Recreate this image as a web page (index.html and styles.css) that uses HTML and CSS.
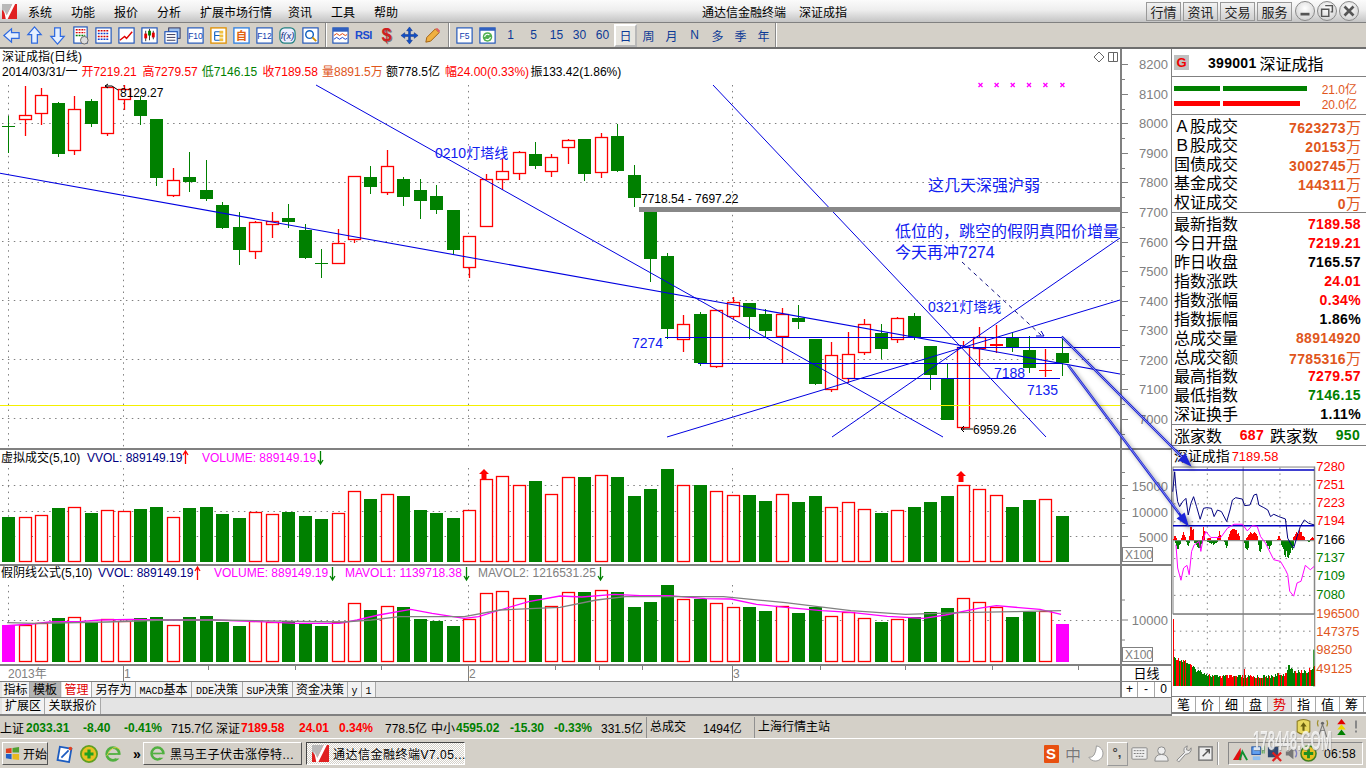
FILE: index.html
```html
<!DOCTYPE html>
<html lang="zh-CN">
<head>
<meta charset="utf-8">
<title>通达信金融终端</title>
<link rel="stylesheet" href="styles.css">
</head>
<body>
<div class="app">
  <header class="titlebar">
    <svg class="logo" viewBox="0 0 16 16"><rect width="16" height="16" fill="#e02020"/><path d="M0 0h11L5 12 0 6z" fill="#b8b8b8"/><path d="M2 6l3 6 6-12h3L6 16H4z" fill="#fff"/></svg>
    <nav class="menu"><span>系统</span><span>功能</span><span>报价</span><span>分析</span><span class="m-wide">扩展市场行情</span><span>资讯</span><span>工具</span><span>帮助</span></nav>
    <div class="apptitle"><span>通达信金融终端</span><span>深证成指</span></div>
    <div class="winbtns"><button>行情</button><button>资讯</button><button>交易</button><button>服务</button></div>
    <div class="circles">
      <i class="circle"><svg viewBox="0 0 20 20"><rect x="5" y="12" width="10" height="3" fill="#555"/></svg></i>
      <i class="circle"><svg viewBox="0 0 20 20"><path d="M8 4h8v7h-2M4 8h8v8H4z" fill="none" stroke="#555" stroke-width="1.6"/></svg></i>
      <i class="circle"><svg viewBox="0 0 20 20"><path d="M5 5l10 10M15 5L5 15" stroke="#555" stroke-width="3"/></svg></i>
    </div>
  </header>

  <div class="toolbar">
    <div class="tool"><svg viewBox="0 0 20 20"><path class="arrowicon" d="M2 10l8-7v4h8v6h-8v4z"/></svg></div>
    <div class="tool"><svg viewBox="0 0 20 20"><path class="arrowicon" d="M10 1l7 8h-4v9H7V9H3z"/></svg></div>
    <div class="tool"><svg viewBox="0 0 20 20"><path class="arrowicon" d="M10 19l7-8h-4V2H7v9H3z"/></svg></div>
    <div class="tool"><svg viewBox="0 0 20 20"><rect class="docicon" x="3" y="1" width="14" height="17"/><path d="M5 4h10M5 7h10" stroke="#e00000" stroke-width="1.5" stroke-dasharray="2 1"/><path d="M5 10h10" stroke="#008000" stroke-width="1.5" stroke-dasharray="2 1"/><circle cx="14" cy="15" r="4" fill="#ddd" stroke="#666"/></svg></div>
    <div class="tool"><svg viewBox="0 0 20 20"><rect class="docicon" x="2" y="2" width="16" height="16"/><path d="M4 5h12M4 11h12" stroke="#d00000" stroke-width="1.6" stroke-dasharray="2 1"/><path d="M4 8h12M4 14h12" stroke="#1040d0" stroke-width="1.6" stroke-dasharray="2 1"/></svg></div>
    <div class="tool"><svg viewBox="0 0 20 20"><rect class="docicon" x="2" y="2" width="16" height="16"/><path d="M3 15l5-4 2 2 6-7" fill="none" stroke="#e00000" stroke-width="1.5"/></svg></div>
    <div class="tool"><svg viewBox="0 0 20 20"><rect class="docicon" x="2" y="2" width="16" height="16"/><path d="M6 5v11M10 3v12M14 5v9" stroke="#333"/><rect x="4.5" y="8" width="3" height="5" fill="#e00000"/><rect x="8.5" y="5" width="3" height="5" fill="#008000"/><rect x="12.5" y="7" width="3" height="5" fill="#e00000"/></svg></div>
    <div class="tool"><svg viewBox="0 0 20 20"><rect x="6" y="2" width="12" height="11" fill="#9cc0f0" stroke="#335"/><rect class="docicon" x="2" y="6" width="13" height="12"/><path d="M4 9h9M4 12h9M4 15h9" stroke="#335"/></svg></div>
    <div class="tool"><svg viewBox="0 0 20 20"><rect class="docicon" x="2" y="2" width="16" height="16"/><text x="10" y="14" class="icontext">F10</text></svg></div>
    <div class="tool"><svg viewBox="0 0 20 20"><rect x="2" y="2" width="16" height="16" fill="#fff" stroke="#e09000" stroke-width="1.4"/><path d="M6 6h7M6 6v9M6 10h7M6 15h7" stroke="#1060c0" stroke-width="1.2"/><rect x="11" y="5" width="4" height="3" fill="#f0c040"/><rect x="11" y="9" width="4" height="3" fill="#f0c040"/><rect x="11" y="13" width="4" height="3" fill="#f0c040"/></svg></div>
    <div class="tool"><svg viewBox="0 0 20 20"><rect x="2" y="2" width="16" height="16" fill="#fff" stroke="#3080e0" stroke-width="1.4"/><text x="10" y="15" class="icontext oj">自</text></svg></div>
    <div class="tool"><svg viewBox="0 0 20 20"><rect class="docicon" x="2" y="2" width="16" height="16"/><text x="10" y="14" class="icontext">F12</text></svg></div>
    <div class="tool"><svg viewBox="0 0 20 20"><rect x="2" y="2" width="16" height="16" rx="5" fill="#eef" stroke="#208080" stroke-width="1.3"/><text x="10" y="14" class="icontext nv">f(x)</text></svg></div>
    <div class="tool"><svg viewBox="0 0 20 20"><rect class="docicon" x="2" y="2" width="16" height="16"/><circle cx="9" cy="9" r="4" fill="#fff" stroke="#1060c0" stroke-width="1.5"/><path d="M12 12l4 4" stroke="#d09000" stroke-width="2"/></svg></div>
    <div class="tbdiv d1"></div>
    <div class="tool"><svg viewBox="0 0 20 20"><rect class="docicon" x="2" y="2" width="16" height="16"/><rect x="2" y="2" width="16" height="4" fill="#3060c0"/><path d="M3 10l3-2 3 2 3-2 3 2 2-1" fill="none" stroke="#e04000"/><path d="M3 14l3-2 3 2 3-2 3 2 2-1" fill="none" stroke="#1040d0"/></svg></div>
    <div class="tool rsi">RSI</div>
    <div class="tool dollar">$</div>
    <div class="tool"><svg viewBox="0 0 20 20"><path d="M10 1l3 4h-2v4h4V7l4 3-4 3v-2h-4v4h2l-3 4-3-4h2v-4H5v2l-4-3 4-3v2h4V5H7z" fill="#1050c8" stroke="#0a2a80" stroke-width=".5"/></svg></div>
    <div class="tool"><svg viewBox="0 0 20 20"><path d="M13 3l4 4-9 9-5 1 1-5z" fill="#f0b040" stroke="#a06010"/><path d="M13 3l4 4 1-2-3-3z" fill="#e06060"/></svg></div>
    <div class="tbdiv d2"></div>
    <div class="tool"><svg viewBox="0 0 20 20"><rect class="docicon" x="2" y="2" width="16" height="16"/><text x="10" y="14" class="icontext">F5</text></svg></div>
    <div class="tool"><svg viewBox="0 0 20 20"><rect class="docicon" x="2" y="2" width="16" height="16"/><rect x="2" y="2" width="16" height="3" fill="#3060c0"/><circle cx="10" cy="11.5" r="5" fill="#50b050"/><path d="M7 11.5a3 3 0 0 1 5-2M13 11.5a3 3 0 0 1-5 2" fill="none" stroke="#fff" stroke-width="1.2"/></svg></div>
    <div class="tool per">1</div><div class="tool per">5</div><div class="tool per">15</div><div class="tool per">30</div><div class="tool per">60</div>
    <div class="tool per active">日</div><div class="tool per">周</div><div class="tool per">月</div><div class="tool per">N</div><div class="tool per">多</div><div class="tool per">季</div><div class="tool per">年</div>
    <div class="tbdiv d3"></div>
  </div>

  <main class="workspace">
    <section class="leftcol">
      <svg class="pane pane-main" viewBox="0 49 1171 399">
        <g id="mainGrid"></g>
        <g id="candles"></g>
        <line x1="0" y1="405.5" x2="1120" y2="405.5" class="yellowline"/>
        <g class="hlines">
          <line x1="665" y1="337.5" x2="1062" y2="337.5"/>
          <line x1="957" y1="347.5" x2="1120" y2="347.5"/>
          <line x1="698" y1="363.5" x2="1062" y2="363.5"/>
          <line x1="847" y1="378.5" x2="1060" y2="378.5"/>
        </g>
        <g class="trend">
          <line class="thick" x1="0" y1="173.3" x2="1120" y2="374"/>
          <line x1="316" y1="85" x2="943" y2="437"/>
          <line x1="713" y1="85" x2="1046" y2="437"/>
          <line x1="832" y1="437" x2="1120" y2="238"/>
          <line x1="667" y1="437" x2="1120" y2="300"/>
        </g>
        <rect x="639" y="207" width="481" height="5" class="greybar"/>
        <path class="dashed" d="M962 262L1041 335"/>
        <path class="plainblue" d="M1036 336h8l-3-5"/>
        <text x="2" y="61" class="t12">深证成指(日线)</text>
        <text y="76" class="t12"><tspan x="2">2014/03/31/一</tspan><tspan x="81.4" class="red">开7219.21</tspan><tspan x="142.4" class="red">高7279.57</tspan><tspan x="201.7" class="green">低7146.15</tspan><tspan x="262.6" class="red">收7189.58</tspan><tspan x="322" class="orange">量8891.5万</tspan><tspan x="386">额778.5亿</tspan><tspan x="445" class="red">幅24.00(0.33%)</tspan><tspan x="530.5">振133.42(1.86%)</tspan></text>
        <text x="120" y="97" class="t12">8129.27</text>
        <path class="blackline" d="M105 86l3-2M105 86l3 2M105 86h7l6 4"/>
        <text x="641" y="203" class="t12">7718.54 - 7697.22</text>
        <text x="973" y="434" class="t12">6959.26</text>
        <path class="blackline" d="M961 429h12M961 429l3-3M961 429l3 3"/>
        <text x="435" y="158" class="anno14">0210灯塔线</text>
        <text x="632" y="348" class="anno14">7274</text>
        <text x="928" y="191" class="anno16">这几天深强沪弱</text>
        <text x="895" y="237" class="anno16">低位的，跳空的假阴真阳价增量</text>
        <text x="895" y="258" class="anno16">今天再冲7274</text>
        <text x="928" y="312" class="anno14">0321灯塔线</text>
        <text x="994" y="378" class="anno14">7188</text>
        <text x="1027" y="395" class="anno14">7135</text>
        <g id="stars"></g>
        <path class="plainblack" d="M1099 52l5 5-5 5-5-5z"/>
        <path class="plainblack" d="M1108.5 52.5h9v9h-9zM1113.5 52.5v9"/>
        <line x1="1121" y1="49" x2="1121" y2="448" class="axisline"/>
        <g id="mainAxis"></g>
      </svg>

      <svg class="pane pane-vol" viewBox="0 450 1171 114">
        <g id="volGrid"></g>
        <g id="volBars"></g>
        <g id="volMarks"></g>
        <text x="1" y="462" class="t12">虚拟成交(5,10)</text>
        <text x="87" y="462" class="t12 navy">VVOL: 889149.19</text>
        <text x="202" y="462" class="t12 mag">VOLUME: 889149.19</text>
        <line x1="1121" y1="450" x2="1121" y2="564" class="axisline"/>
        <g id="volAxis"></g>
        <rect x="1122.5" y="547.5" width="30" height="14" class="xbox"/>
        <text x="1125" y="559" class="t12 gray">X100</text>
      </svg>

      <svg class="pane pane-vol2" viewBox="0 566 1171 98">
        <g id="vol2Grid"></g>
        <g id="vol2Bars"></g>
        <polyline id="maMag" class="ma mag-line" points=""/>
        <polyline id="maGray" class="ma gray-line" points=""/>
        <g id="vol2Marks"></g>
        <text x="1" y="577" class="t12">假阴线公式(5,10)</text>
        <text x="98" y="577" class="t12 navy">VVOL: 889149.19</text>
        <text x="214" y="577" class="t12 mag">VOLUME: 889149.19</text>
        <text x="345" y="577" class="t12 mag">MAVOL1: 1139718.38</text>
        <text x="478" y="577" class="t12 gray">MAVOL2: 1216531.25</text>
        <line x1="1121" y1="566" x2="1121" y2="664" class="axisline"/>
        <text x="1168" y="625" class="t13 gray end">10000</text>
        <path class="plaingray" d="M1122 620h6M1122 600h3M1122 640h3"/>
        <rect x="1122.5" y="647.5" width="30" height="14" class="xbox"/>
        <text x="1125" y="659" class="t12 gray">X100</text>
      </svg>

      <div class="timeline">
        <svg class="timeaxis" viewBox="0 666 1120 15">
          <text x="8" y="678" class="t12 gray">2013年</text>
          <text x="124" y="678" class="t12 gray">1</text>
          <text x="469" y="678" class="t12 gray">2</text>
          <text x="733" y="678" class="t12 gray">3</text>
          <path class="plaingray" d="M123.5 666v15M468.5 666v15M732.5 666v15M208.5 666v4M295.5 666v4M381.5 666v4M555.5 666v4M599.5 666v4M642.5 666v4M820.5 666v4M905.5 666v4M992.5 666v4M1078.5 666v4"/>
        </svg>
        <div class="periodbox">日线</div>
      </div>

      <div class="tabrow">
        <div class="tabs">
          <span class="tab">指标</span><span class="tab on">模板</span><span class="tab hot">管理</span><span class="tab">另存为</span><span class="tab"><b>MACD</b>基本</span><span class="tab"><b>DDE</b>决策</span><span class="tab"><b>SUP</b>决策</span><span class="tab">资金决策</span><span class="tab"><b>y</b></span><span class="tab"><b>1</b></span>
        </div>
        <div class="zoombtns"><span>+</span><span>-</span><span>0</span></div>
      </div>
      <div class="extrow"><span>扩展区</span><span>关联报价</span></div>
    </section>

    <aside class="panel">
      <div class="p-head"><span class="gbadge">G</span><b>399001</b><span class="p-name">深证成指</span></div>
      <div class="p-bars">
        <div class="barrow"><i class="seg green-bg s1"></i><i class="seg green-bg s2"></i><span>21.0亿</span></div>
        <div class="barrow"><i class="seg red-bg s1"></i><i class="seg red-bg s3"></i><span>20.0亿</span></div>
      </div>
      <div class="p-sec s5">
        <div class="row"><span>Ａ股成交</span><b class="orange-t">7623273<em>万</em></b></div>
        <div class="row"><span>Ｂ股成交</span><b class="orange-t">20153<em>万</em></b></div>
        <div class="row"><span>国债成交</span><b class="orange-t">3002745<em>万</em></b></div>
        <div class="row"><span>基金成交</span><b class="orange-t">144311<em>万</em></b></div>
        <div class="row"><span>权证成交</span><b class="orange-t">0<em>万</em></b></div>
      </div>
      <div class="p-sec s11">
        <div class="row"><span>最新指数</span><b class="red-t">7189.58</b></div>
        <div class="row"><span>今日开盘</span><b class="red-t">7219.21</b></div>
        <div class="row"><span>昨日收盘</span><b>7165.57</b></div>
        <div class="row"><span>指数涨跌</span><b class="red-t">24.01</b></div>
        <div class="row"><span>指数涨幅</span><b class="red-t">0.34%</b></div>
        <div class="row"><span>指数振幅</span><b>1.86%</b></div>
        <div class="row"><span>总成交量</span><b class="orange-t">88914920</b></div>
        <div class="row"><span>总成交额</span><b class="orange-t">7785316<em>万</em></b></div>
        <div class="row"><span>最高指数</span><b class="red-t">7279.57</b></div>
        <div class="row"><span>最低指数</span><b class="green-t">7146.15</b></div>
        <div class="row"><span>深证换手</span><b>1.11%</b></div>
      </div>
      <div class="p-updown"><span>涨家数</span><b class="red-t">687</b><span>跌家数</span><b class="green-t">950</b></div>
      <svg class="mini" viewBox="1171 448 195 250">
        <text x="1173" y="462" class="t14">深证成指</text>
        <text x="1231" y="462" class="t13 red">7189.58</text>
        <g id="miniChart"></g>
      </svg>
      <div class="p-tabs"><span>笔</span><span>价</span><span>细</span><span>盘</span><span class="hot-tab">势</span><span>指</span><span>值</span><span>筹</span></div>
    </aside>
  </main>

  <footer class="statusbar">
    <span>上证</span><b class="green-t">2033.31</b><b class="green-t">-8.40</b><b class="green-t">-0.41%</b><span>715.7亿</span><span>深证</span><b class="red-t">7189.58</b><b class="red-t">24.01</b><b class="red-t">0.34%</b><span>778.5亿</span><span>中小</span><b class="green-t">4595.02</b><b class="green-t">-15.30</b><b class="green-t">-0.33%</b><span>331.5亿</span><span class="sb-div">总成交</span><span>1494亿</span><span class="sb-div">上海行情主站</span>
    <div class="sb-icons">
      <svg viewBox="0 0 14 18"><path d="M1 3q6-3 12 0v10q-6 5-12 0z" fill="#e8d860" stroke="#8a7a20"/><path d="M7 4l3 4H8v4H6V8H4z" fill="#6a6010"/></svg>
      <svg viewBox="0 0 14 18"><path d="M7 6l-4 12M7 6l4 12M5 12h4" stroke="#777" fill="none"/><path d="M3 2a6 6 0 0 0 0 6M11 2a6 6 0 0 1 0 6" stroke="#a09030" fill="none"/><circle cx="7" cy="5" r="1.5" fill="#666"/></svg>
      <svg viewBox="0 0 14 18"><path d="M7 1l4 5H3z" fill="#e00000"/><path d="M7 6l4 5H3z" fill="#e8d800"/><path d="M7 11l4 5H3z" fill="#008000"/></svg>
      <svg viewBox="0 0 6 18"><rect x="2" y="2" width="2" height="8" fill="#888"/><rect x="2" y="12" width="2" height="2" fill="#888"/></svg>
    </div>
  </footer>

  <div class="taskbar">
    <div class="startbtn"><svg viewBox="0 0 16 16"><path d="M1 3l6-1v5.5H1z" fill="#e04020"/><path d="M8 2l7-1v6H8z" fill="#50a030"/><path d="M1 8.5h6V14l-6-1z" fill="#2060c8"/><path d="M8 8.5h7V15l-7-1z" fill="#e8b820"/></svg><span>开始</span></div>
    <div class="quick">
      <svg viewBox="0 0 20 20"><rect x="3" y="3" width="13" height="15" fill="#fff" stroke="#1c5cc0" stroke-width="2" transform="rotate(10 10 10)"/><path d="M6 14l8-8" stroke="#1c5cc0" stroke-width="2"/><circle cx="16" cy="4" r="2" fill="#e04020"/></svg>
      <svg viewBox="0 0 20 20"><circle cx="10" cy="10" r="9" fill="#e8c020" stroke="#60a020" stroke-width="2"/><path d="M10 5v10M5 10h10" stroke="#20a020" stroke-width="3.5"/></svg>
      <svg viewBox="0 0 20 20"><circle cx="10" cy="10" r="7" fill="none" stroke="#50b040" stroke-width="3"/><path d="M4 10h12" stroke="#50b040" stroke-width="2"/><path d="M18 5Q10-2 3 12" fill="none" stroke="#e0d040"/><rect x="13" y="11" width="7" height="4" fill="#d4d0c8"/></svg>
      <span class="more">»</span>
    </div>
    <div class="taskbtn"><svg viewBox="0 0 20 20"><circle cx="10" cy="10" r="7" fill="none" stroke="#50b040" stroke-width="3"/><path d="M4 10h12" stroke="#50b040" stroke-width="2"/><rect x="13" y="11" width="7" height="4" fill="#d4d0c8"/></svg><span>黑马王子伏击涨停特...</span></div>
    <div class="taskbtn cur"><svg viewBox="0 0 16 16"><rect width="16" height="16" fill="#e02020"/><path d="M0 0h11L5 12 0 6z" fill="#b8b8b8"/><path d="M2 6l3 6 6-12h3L6 16H4z" fill="#fff"/></svg><span>通达信金融终端V7.05...</span></div>
    <div class="ime">
      <i class="sogou">S</i>
      <i class="glyph">中</i>
      <svg viewBox="0 0 20 20"><path d="M11 2a8 8 0 1 1-8 12q7 1 8-12z" fill="#fff" stroke="#999"/></svg>
      <i class="punct">°,</i>
      <svg viewBox="0 0 20 20"><rect x="2" y="4" width="16" height="12" rx="1" fill="#eee" stroke="#888"/><path d="M4 7h12M4 10h12M6 13h8" stroke="#777" stroke-dasharray="2 1"/></svg>
      <svg viewBox="0 0 20 20"><circle cx="10" cy="7" r="4" fill="#eee" stroke="#888"/><path d="M3 18q0-7 7-7t7 7z" fill="#eee" stroke="#888"/></svg>
      <svg viewBox="0 0 20 20"><path d="M3 17l8-8q-2-5 3-7l-1 4 3 1 2-3q1 6-6 7l-7 8z" fill="#eee" stroke="#888"/></svg>
      <svg viewBox="0 0 20 20"><rect x="3" y="3" width="14" height="14" fill="#eee" stroke="#777" stroke-width="1.5"/><path d="M7 13l7-7M10 6h4v4" fill="none" stroke="#555" stroke-width="1.5"/></svg>
    </div>
    <div class="imediv"></div>
    <div class="tray">
      <svg viewBox="0 0 18 18"><path d="M1 16L9 3l1 13z" fill="#e01010"/><path d="M8 16l3-9 5 9" fill="none" stroke="#109030" stroke-width="2"/></svg>
      <svg viewBox="0 0 18 18"><rect x="3" y="2" width="9" height="8" fill="#60a0f0" stroke="#2050a0"/><rect x="4" y="12" width="8" height="4" fill="#90c0f0"/><path d="M14 3v6M16 1v8" stroke="#40a040"/></svg>
      <svg viewBox="0 0 18 18"><rect x="2" y="2" width="11" height="11" fill="#304870"/><path d="M7 8l9 9M16 8l-9 9" stroke="#e02020" stroke-width="2.4"/></svg>
      <svg viewBox="0 0 18 18"><path d="M3 7h3l5-4v12l-5-4H3z" fill="#777"/><path d="M13 5q3 4 0 8" fill="none" stroke="#8080c0" stroke-width="1.5"/></svg>
      <svg viewBox="0 0 18 18"><circle cx="9" cy="9" r="8" fill="#e8c020" stroke="#408020" stroke-width="1.6"/><path d="M9 4v10M4 9h10" stroke="#209020" stroke-width="3"/></svg>
      <time>06:58</time>
    </div>
    <div class="watermark">178448.COM</div>
  </div>

  <svg class="overlay" viewBox="0 0 1366 768">
    <g class="bigarrow">
      <line x1="1061.7" y1="336.7" x2="1185" y2="460"/>
      <polygon points="1191.7,466.7 1185.2,453.2 1178.2,460.2"/>
      <line x1="1068" y1="365" x2="1181" y2="516"/>
      <polygon points="1189,526.7 1184.6,512.5 1176.6,518.5"/>
    </g>
    <g class="bigarrow-in">
      <line x1="1061.7" y1="336.7" x2="1182" y2="457"/>
      <line x1="1068" y1="365" x2="1179" y2="513"/>
    </g>
  </svg>
</div>
<script src="app.js"></script>
</body>
</html>
```

FILE: styles.css
```css
* { box-sizing: border-box; }
html, body { margin: 0; padding: 0; background: #d4d0c8; }
body { font-family: "Liberation Sans", "Noto Sans CJK SC", sans-serif; font-size: 12px; color: #000; }
.app { position: relative; width: 1366px; height: 768px; overflow: hidden; display: flex; flex-direction: column; background: #d4d0c8; }
svg { display: block; }
svg text { font-family: "Liberation Sans", "Noto Sans CJK SC", sans-serif; fill: #000; }

/* title bar */
.titlebar { height: 23px; flex: none; display: flex; align-items: center; background: linear-gradient(#fbfbfb, #eeeeee 45%, #c4c4c4); border-bottom: 1px solid #808080; padding-left: 2px; }
.logo { width: 15px; height: 15px; flex: none; }
.menu { display: flex; margin-left: 11px; width: 395px; flex: none; }
.menu span { width: 43px; }
.menu .m-wide { width: 88px; }
.apptitle { margin-left: 279px; width: 444px; display: flex; gap: 13px; flex: none; }
.winbtns { display: flex; gap: 2px; margin-left: 0; flex: none; }
.winbtns button { width: 35px; height: 19px; padding: 0; font: 13px "Noto Sans CJK SC", sans-serif; line-height: 17px; background: linear-gradient(#f2f2f2, #cfcfcf); border: 1px solid #999; color: #222; }
.circles { display: flex; gap: 2px; margin-left: 3px; flex: none; }
.circle { width: 20px; height: 20px; border-radius: 50%; border: 1px solid #8a8a8a; background: radial-gradient(circle at 50% 35%, #fff, #c8c8c8); display: block; }
.circle svg { width: 18px; height: 18px; }

/* toolbar */
.toolbar { height: 26px; flex: none; display: flex; align-items: center; background: #d4d0c8; border-bottom: 2px solid #6e6e6e; }
.tool { width: 23px; height: 23px; flex: none; display: flex; align-items: center; justify-content: center; }
.tool svg { width: 19px; height: 19px; }
.arrowicon { fill: #e6f0ff; stroke: #2f6ae0; stroke-width: 1.3; }
.docicon { fill: #fff; stroke: #1c52b8; stroke-width: 1.2; }
.icontext { font-size: 9px; text-anchor: middle; fill: #1040b0; }
svg text.icontext { fill: #1040b0; }
svg text.icontext.oj { font-size: 12px; fill: #e06010; font-weight: 700; }
svg text.icontext.nv { fill: #103080; font-style: italic; font-size: 10px; }
.tbdiv { width: 2px; height: 24px; flex: none; background: #8a8a8a; border-right: 1px solid #fff; }
.d1 { margin: 0 2px 0 3px; }
.d2 { margin: 0 3px 0 4px; }
.d3 { margin-left: 0; }
.rsi { color: #1a4ad0; font-weight: 700; font-size: 11px; letter-spacing: -.5px; }
.dollar { color: #d02020; font-weight: 700; font-size: 18px; text-shadow: 1px 1px 0 #777; }
.per { color: #0c3a96; font-size: 12px; }
.per.active { background: #e8e6e0; border: 2px solid #fff; border-right-color: #b8b8b8; border-bottom-color: #b8b8b8; }

/* workspace */
.workspace { height: 667px; flex: none; display: flex; background: #fff; }
.leftcol { width: 1171px; flex: none; display: flex; flex-direction: column; border-left: 1px solid #808080; }
.pane { width: 1171px; flex: none; margin-left: -1px; background: #fff; }
.pane-main { height: 399px; }
.pane-vol { height: 114px; }
.pane-vol2 { height: 98px; }
.pane-main, .pane-vol, .pane-vol2 { box-shadow: 0 2px 0 #808080; margin-bottom: 2px; }

.t12 { font-size: 12px; }
.t13 { font-size: 13px; }
.t14 { font-size: 14px; }
.end { text-anchor: end; }
svg text.red { fill: #ff0000; }
svg text.green, tspan.green { fill: #008000; }
tspan.red { fill: #ff0000; }
tspan.orange { fill: #e0561c; }
svg text.orange { fill: #e0561c; }
svg text.navy { fill: #000080; }
svg text.mag { fill: #ff00ff; }
svg text.gray { fill: #808080; }
.anno14 { font-size: 14px; }
.anno16 { font-size: 16px; }
svg text.anno14, svg text.anno16 { fill: #1020f0; }
.yellowline { stroke: #f4f000; stroke-width: 1; }
.hlines line { stroke: #0000e0; stroke-width: 1.2; }
.trend line { stroke: #0000e0; stroke-width: 1; }
.trend line.thick { stroke-width: 1.1; }
.greybar { fill: #888888; }
.dashed { fill: none; stroke: #101080; stroke-width: 1; stroke-dasharray: 4 4; }
.plainblue { fill: none; stroke: #0000c0; }
.plainblack { fill: none; stroke: #666; }
.plaingray { fill: none; stroke: #808080; }
.blackline { fill: none; stroke: #000; }
.axisline { stroke: #808080; stroke-width: 2; }
.xbox { fill: #fff; stroke: #808080; }
.ma { fill: none; stroke-width: 1.3; }
.mag-line { stroke: #ff00ff; }
.gray-line { stroke: #808080; }

/* timeline + tabs */
.timeline { height: 16px; flex: none; display: flex; margin-left: -1px; background: #fff; border-bottom: 1px solid #808080; }
.timeaxis { width: 1120px; height: 15px; flex: none; }
.periodbox { width: 51px; border-left: 2px solid #808080; text-align: center; font-size: 13px; line-height: 15px; }
.tabrow { height: 16px; flex: none; display: flex; margin-left: -1px; background: #e4e4e4; border-bottom: 1px solid #808080; }
.tabs { width: 1120px; flex: none; padding-left: 2px; display: grid; grid-template-columns: 28px 31px 31px 44px 56px 51px 50px 55px 14px 14px; }
.tab { text-align: center; line-height: 16px; font-size: 12px; background: #f2f2f2; border-right: 1px solid #a8a8a8; white-space: nowrap; overflow: hidden; }
.tab b { font: 400 10px "Liberation Mono", monospace; }
.tab.on { background: #b4b4b4; }
.tab.hot { color: #e00000; background: #fff; margin-left: 1px; }
.zoombtns { width: 51px; flex: none; display: grid; grid-template-columns: 16px 17px 18px; background: #fff; border-left: 2px solid #808080; }
.zoombtns span { text-align: center; line-height: 15px; border-right: 1px solid #a8a8a8; }
.extrow { height: 18px; flex: none; display: flex; margin-left: -1px; background: #e4e4e4; padding-left: 2px; border-bottom: 2px solid #808080; }
.extrow span { padding: 0 3px; line-height: 17px; border-right: 1px solid #a8a8a8; background: #f2f2f2; width: 43px; white-space: nowrap; text-align: center; }
.extrow span + span { width: 56px; }

/* quote panel */
.panel { width: 195px; flex: none; display: flex; flex-direction: column; background: #fff; border-left: 1px solid #808080; }
.p-head { height: 28px; flex: none; display: flex; align-items: center; padding-left: 2px; border-bottom: 1px solid #808080; font-size: 14px; }
.gbadge { width: 15px; height: 15px; background: #c0c0c0; color: #f00000; font: 700 13px/15px "Liberation Sans", sans-serif; text-align: center; margin-right: 19px; }
.p-head b { letter-spacing: .3px; }
.p-name { margin-left: 3px; font-size: 16px; }
.p-bars { height: 38px; flex: none; padding: 4px 0 0 2px; border-bottom: 1px solid #808080; display: flex; flex-direction: column; }
.barrow { height: 15px; flex: none; display: flex; align-items: center; position: relative; }
.seg { display: block; height: 5px; margin-right: 3px; }
.s1 { width: 46px; }
.s2 { width: 84px; }
.s3 { width: 77px; }
.green-bg { background: #008000; }
.red-bg { background: #ff0000; }
.barrow span { position: absolute; right: 9px; color: #e0561c; font-size: 12px; }
.p-sec { flex: none; padding: 2px 5px 0 2px; border-bottom: 1px solid #808080; }
.s5 { height: 98px; }
.s11 { height: 212px; }
.row { height: 19px; display: flex; justify-content: space-between; align-items: center; font-size: 16px; line-height: 19px; white-space: nowrap; }
.row b { font-size: 14px; letter-spacing: .35px; font-family: "Liberation Sans", sans-serif; }
.row em { font: 400 15px "Noto Sans CJK SC", sans-serif; letter-spacing: 0; }
.orange-t { color: #e0561c; }
.red-t { color: #ff0000; }
.green-t { color: #008000; }
.p-updown { height: 21px; flex: none; display: flex; align-items: center; padding: 0 3px 0 2px; font-size: 16px; border-bottom: 1px solid #808080; }
.p-updown b { font-size: 14px; letter-spacing: .3px; width: 42px; text-align: right; margin-right: 6px; font-family: "Liberation Sans", sans-serif; }
.p-updown b:last-child { margin-right: 0; }
.mini { width: 194px; height: 250px; flex: none; }
.p-tabs { height: 18px; flex: none; display: grid; grid-template-columns: repeat(8, 24px); border-top: 1px solid #808080; border-bottom: 2px solid #808080; font-size: 13px; text-align: center; line-height: 15px; }
.p-tabs span { border-right: 1px solid #a8a8a8; }
.p-tabs .hot-tab { color: #e00000; background: #e4e4e4; }

/* status */
.statusbar { height: 23px; flex: none; display: grid; grid-template-columns: 26px 57px 41px 47px 45px 25px 58px 40px 46px 46px 25px 54px 44px 47px 45px 57px 51px 200px 1fr; align-items: center; font-size: 12px; border-bottom: 1px solid #fff; padding-top: 1px; white-space: nowrap; }
.sb-div { border-left: 1px solid #909090; padding-left: 3px; line-height: 21px; }
.sb-icons { display: flex; gap: 4px; justify-content: flex-end; padding-right: 7px; align-items: center; }
.sb-icons svg { width: 15px; height: 19px; }
.sb-icons svg:last-child { width: 6px; }

/* taskbar */
.taskbar { height: 29px; flex: none; display: flex; align-items: center; position: relative; padding-left: 2px; }
.startbtn { width: 46px; height: 23px; flex: none; display: flex; align-items: center; gap: 3px; padding-left: 2px; font-size: 12px; white-space: nowrap; border: 1px solid; border-color: #fff #555 #555 #fff; background: #d4d0c8; }
.startbtn svg { width: 15px; height: 15px; flex: none; }
.quick { width: 95px; display: flex; align-items: center; gap: 6px; padding-left: 8px; flex: none; }
.quick svg { width: 18px; height: 18px; flex: none; }
.more { font-size: 14px; font-weight: 700; margin-left: 5px; }
.taskbtn { width: 159px; height: 23px; flex: none; display: flex; align-items: center; gap: 4px; padding-left: 5px; border: 1px solid; border-color: #fff #555 #555 #fff; margin-right: 4px; font-size: 12px; letter-spacing: .5px; white-space: nowrap; }
.taskbtn svg { width: 17px; height: 17px; flex: none; }
.taskbtn.cur { border-color: #444 #fff #fff #444; background-color: #eeece8; background-image: repeating-conic-gradient(#d4d0c8 0 25%, #fff 0 50%); background-size: 2px 2px; }
.ime { margin-left: 571px; width: 176px; display: grid; grid-template-columns: repeat(8, 22px); align-items: center; justify-items: center; flex: none; }
.ime svg { width: 19px; height: 19px; }
.sogou { width: 15px; height: 18px; background: #e85010; color: #fff; font: 700 15px/18px "Liberation Sans", sans-serif; text-align: center; border-radius: 1px; }
.glyph { font: 400 16px "Noto Sans CJK SC", sans-serif; color: #777; text-shadow: 0 0 1px #fff; }
.punct { font: 700 13px "Liberation Sans", sans-serif; color: #444; width: 21px; height: 24px; line-height: 20px; border: 1px solid #fff; border-right-color: #999; border-bottom-color: #999; text-align: center; font-style: normal; }
.imediv { width: 2px; height: 23px; flex: none; margin: 0 9px 0 1px; background: #999; border-right: 1px solid #fff; }
.tray { width: 135px; height: 23px; border: 1px solid; border-color: #888 #fff #fff #888; display: flex; align-items: center; padding-left: 3px; flex: none; }
.tray svg { width: 17px; height: 17px; flex: none; }
.tray time { margin-left: 7px; font-size: 12px; letter-spacing: .4px; }
.watermark { position: absolute; left: 1253px; top: -13px; line-height: 30px; font: 700 27px/30px "Liberation Sans", sans-serif; color: rgba(255,255,255,.78); text-shadow: 1px 1px 1px rgba(120,120,120,.6); transform: scaleX(.49); transform-origin: left top; white-space: nowrap; pointer-events: none; }

/* overlay arrows */
.overlay { position: absolute; inset: 0; width: 1366px; height: 768px; pointer-events: none; }
.bigarrow { filter: drop-shadow(3px 3px 2px rgba(0,0,0,.4)); }
.bigarrow line { stroke: #1c24d8; stroke-width: 2.4; }
.bigarrow polygon { fill: #1c24d8; }
.bigarrow-in line { stroke: #b4b8f0; stroke-width: .7; }
```

FILE: app.js
```js
(function () {
  var NS = 'http://www.w3.org/2000/svg';
  function el(parent, tag, attrs, text) {
    var n = document.createElementNS(NS, tag);
    for (var k in attrs) n.setAttribute(k, attrs[k]);
    if (text !== undefined) n.textContent = text;
    parent.appendChild(n);
    return n;
  }
  function $(id) { return document.getElementById(id); }
  var GREEN = '#008000', RED = '#ff0000', GREY = '#808080';
  function cx(i) { return Math.round(8.3 + 16.46 * i); }

  function dotH(g, y, x0, x1) { el(g, 'line', { x1: x0, x2: x1, y1: y + .5, y2: y + .5, stroke: GREY, 'stroke-dasharray': '1.5 4.4' }); }
  function dotV(g, x, y0, y1) { el(g, 'line', { x1: x + .5, x2: x + .5, y1: y0, y2: y1, stroke: GREY, 'stroke-dasharray': '1.5 4.4' }); }

  /* candle data: colour, body top, body bottom, high, low (reference rows x3) */
  var c8 = [['g',138,140,108,220],['r',106,116,18,167],['r',46,98,24,134],['g',69,222,66,230],['r',88,209,48,224],['g',63,132,57,140],['r',22,158,22,167],['r',28,56,15,90],['g',60,108,48,135],['g',117,294,117,318],['r',301,344,264,351],['g',291,306,216,336],['g',330,357,240,363],['g',375,444,366,447],['g',441,510,396,555],['r',427,512,423,537],['r',424,431,396,474],['g',414,426,372,444],['g',450,534,432,537],['g',549,551,507,594],['r',490,548,447,548],['r',289,476,289,488],['g',291,321,258,342],['r',259,335,210,345]];
  var c9 = [['g',207,261,201,288],['g',240,273,207,327],['g',258,300,225,312],['g',300,420,300,432],['r',379,470,379,504],['r',208,347,192,350],['r',184,206,147,240],['r',127,188,123,210],['g',132,168,96,177],['r',142,182,132,201],['r',91,110,87,162],['g',87,192,87,213],['r',82,185,69,204],['g',78,183,42,186],['g',195,264,165,291],['g',297,447,297,516],['g',438,657,429,687],['r',643,686,615,726],['g',612,759,606,768],['r',601,767,601,774],['r',577,617,561,627],['g',579,621,579,687],['g',612,663,597,684],['r',613,677,594,760]];
  var c10 = [['g',323,336,285,357],['g',387,522,387,525],['r',436,536,396,546],['r',433,505,366,520],['r',343,425,327,435],['g',369,417,343,447],['r',325,388,321,399],['g',318,384,309,390],['g',408,495,408,540],['g',505,630,460,630],['r',411,650,393,660],['r',381,414,351,468],['rf',403,408,345,430],['g',383,412,366,426],['g',420,474,378,489],['rf',479,482,417,501],['g',429,459,378,498]];
  var candles = [];
  c8.forEach(function (d) { candles.push([d[0], 80 + d[1] / 3, 80 + d[2] / 3, 80 + d[3] / 3, 80 + d[4] / 3]); });
  c9.forEach(function (d) { candles.push([d[0], 110 + d[1] / 3, 110 + d[2] / 3, 110 + d[3] / 3, 110 + d[4] / 3]); });
  c10.forEach(function (d) { candles.push([d[0], 210 + d[1] / 3, 210 + d[2] / 3, 210 + d[3] / 3, 210 + d[4] / 3]); });

  var g = $('mainGrid');
  [123, 182, 241, 300, 359, 418].forEach(function (y) { dotH(g, y, 2, 1120); });
  [8, 123, 468, 732].forEach(function (x) { dotV(g, x, 85, 448); });

  function redBox(gr, x, top, w, h) {
    el(gr, 'rect', { x: x - 5.5, y: top + .5, width: w, height: h, fill: '#fff', stroke: RED, 'stroke-width': 1.3 });
  }

  var cg = $('candles');
  candles.forEach(function (d, i) {
    var x = cx(i), col = d[0] === 'g' ? GREEN : RED;
    var top = Math.round(d[1]), bot = Math.round(d[2]);
    el(cg, 'line', { x1: x + .5, x2: x + .5, y1: Math.round(d[3]), y2: Math.round(d[4]), stroke: col, 'stroke-width': d[0] === 'g' ? 1 : 1.3 });
    if (d[0] === 'g' || d[0] === 'rf') {
      el(cg, 'rect', { x: x - 6, y: top, width: 13, height: Math.max(1, bot - top), fill: col, 'shape-rendering': 'crispEdges' });
    } else {
      redBox(cg, x, top, 12, Math.max(1, bot - top));
    }
  });

  /* pink markers */
  [980.5, 996.6, 1012.7, 1029, 1045.4, 1062.4].forEach(function (x) {
    el($('stars'), 'path', { d: 'M' + (x - 2) + ' 83l4 4M' + (x + 2) + ' 83l-4 4', stroke: '#ff00ff', 'stroke-width': 1.3, fill: 'none' });
  });

  /* main axis */
  var ax = $('mainAxis');
  for (var i = 0; i < 13; i++) {
    var v = 8200 - i * 100, y = 64.3 + i * 29.54;
    el(ax, 'text', { x: 1168, y: y + 5, class: 't13 gray end' }, v);
    el(ax, 'line', { x1: 1122, x2: 1128, y1: Math.round(y) + .5, y2: Math.round(y) + .5, stroke: GREY });
    el(ax, 'line', { x1: 1122, x2: 1125, y1: Math.round(y + 14.77) + .5, y2: Math.round(y + 14.77) + .5, stroke: GREY });
  }

  /* volume bars */
  var colors = 'g r r g r g r r g g r g g g g r r g g g r r g r g g g g r r r r g r r g r g g g g r g r r g g r g g r r r g r g g g r r r g g r g'.split(' ');
  var v1a = [201,202,196,174,172,189,181,184,177,171,202,174,171,192,204,187,193,186,198,207,190,124,147,133,138,180,189,204,181,88,79,106,93,133];
  var v1b = [82,81,76,81,138,117,57,106,105,124,136,135,153,133,156,138,172,157,178,189,181,171,156,138,106,118,136,171,150,148,198];
  var v2a = [525,525,519,504,502,516,508,513,504,501,526,501,498,516,528,514,517,513,521,528,517,460,480,469,471,507,513,528,508,430,424,445,435,469];
  var v2b = [427,426,421,426,471,456,405,448,447,460,472,471,483,469,489,471,499,487,505,516,508,501,486,474,445,457,472,501,486,483,522];
  function bars(gr, tops, base) {
    tops.forEach(function (t, i) {
      var x = cx(i), y = Math.round(450 + t / 3), col = colors[i];
      if (col === 'g') el(gr, 'rect', { x: x - 6, y: y, width: 13, height: base - y, fill: GREEN, 'shape-rendering': 'crispEdges' });
      else redBox(gr, x, y, 12, base - y - 1);
    });
  }
  bars($('volBars'), v1a.concat(v1b), 562);
  bars($('vol2Bars'), v2a.concat(v2b), 662);
  /* magenta first and last bars in the lower pane */
  [0, 64].forEach(function (i) {
    var t = (i === 0 ? v2a[0] : v2b[30]), y = Math.round(450 + t / 3);
    el($('vol2Bars'), 'rect', { x: cx(i) - 6, y: y, width: 13, height: 662 - y, fill: '#ff00ff', 'shape-rendering': 'crispEdges' });
  });

  var vg = $('volGrid');
  [485, 511, 536].forEach(function (y) { dotH(vg, y, 2, 1120); });
  [8, 123, 468, 732].forEach(function (x) { dotV(vg, x, 468, 562); });
  var v2g = $('vol2Grid');
  dotH(v2g, 620, 2, 1120);
  [8, 123, 468, 732].forEach(function (x) { dotV(v2g, x, 585, 662); });

  function pts(a, xf, x0) { return a.map(function (p) { return (x0 + p[0] / xf).toFixed(1) + ',' + (450 + p[1] / 3).toFixed(1); }).join(' '); }
  var magA = [[6,528],[90,522],[140,516],[230,514],[280,510],[370,508],[460,510],[600,510],[700,514],[830,520],[950,520],[1000,510],[1060,495],[1150,478],[1210,490],[1300,505],[1340,500],[1400,480],[1480,455],[1568,438]];
  var magB = [[60,441],[150,433],[220,437],[300,437],[400,446],[470,447],[540,463],[620,472],[720,482],[800,487],[900,499],[1000,505],[1060,495],[1150,475],[1200,467],[1320,478],[1378,493]];
  var grayA = [[20,518],[100,520],[300,516],[460,510],[600,510],[830,514],[960,516],[1040,510],[1120,500],[1300,500],[1400,480],[1500,475],[1568,472]];
  var grayB = [[100,450],[180,440],[450,440],[620,458],[800,482],[950,493],[1100,488],[1250,485],[1378,482]];
  $('maMag').setAttribute('points', pts(magA, 2.8, 0) + ' ' + pts(magB, 2.75, 560));
  $('maGray').setAttribute('points', pts(grayA, 2.8, 0) + ' ' + pts(grayB, 2.75, 560));

  /* fat arrows + tiny arrows */
  function fat(gr, x, y) {
    el(gr, 'path', { d: 'M' + x + ' ' + y + 'l5 5h-2.5v6h-5v-6h-2.5z', fill: RED });
  }
  fat($('volMarks'), 484, 469);
  fat($('volMarks'), 961, 471);
  function tiny(gr, x, y, up, col) {
    var d = up ? 'M' + x + ' ' + (y + 13) + 'V' + y + 'M' + (x - 2.5) + ' ' + (y + 4) + 'L' + x + ' ' + y + 'L' + (x + 2.5) + ' ' + (y + 4)
      : 'M' + x + ' ' + y + 'V' + (y + 13) + 'M' + (x - 2.5) + ' ' + (y + 9) + 'L' + x + ' ' + (y + 13) + 'L' + (x + 2.5) + ' ' + (y + 9);
    el(gr, 'path', { d: d, stroke: col, 'stroke-width': 1.3, fill: 'none' });
  }
  tiny($('volMarks'), 185.5, 451, true, RED);
  tiny($('volMarks'), 320.5, 451, false, GREEN);
  tiny($('vol2Marks'), 197.5, 567, true, RED);
  tiny($('vol2Marks'), 332.5, 567, false, GREEN);
  tiny($('vol2Marks'), 466.5, 567, false, GREEN);
  tiny($('vol2Marks'), 600.5, 567, false, GREEN);

  var va = $('volAxis');
  [[15000, 485], [10000, 511], [5000, 536]].forEach(function (p) { el(va, 'text', { x: 1168, y: p[1] + 6, class: 't13 gray end' }, p[0]); });
  for (var t = 0; t < 7; t++) {
    var ty = Math.round(485 + t * 12.8 - 13) + .5;
    el(va, 'line', { x1: 1122, x2: t % 2 ? 1128 : 1125, y1: ty, y2: ty, stroke: GREY });
  }

  /* mini chart: reference-crop coordinates (offset 1130,450, x3) */
  var m = $('miniChart');
  function X(z) { return 1130 + z / 3; }
  function Y(z) { return 450 + z / 3; }
  function seed(i) { var s = Math.sin(i * 12.9898) * 43758.5453; return s - Math.floor(s); }
  el(m, 'rect', { x: 1172, y: 468.5, width: 142, height: 147.5, fill: '#fff', stroke: GREY });
  [206.5, 279.5].forEach(function (x) { dotV(m, 1000 + x - .5, 469, 689); });
  [486, 505, 523, 560, 578, 597, 633, 652, 670].forEach(function (y) { dotH(m, y, 1173, 1314); });
  el(m, 'line', { x1: 1242.5, x2: 1242.5, y1: 468, y2: 689, stroke: GREY });
  el(m, 'line', { x1: 1314.5, x2: 1314.5, y1: 468, y2: 689, stroke: GREY });
  el(m, 'line', { x1: 1172, x2: 1314, y1: 616.5, y2: 616.5, stroke: GREY });

  /* money-flow bars */
  var up = [[125,135,15],[150,165,25],[175,190,55],[213,222,45],[228,240,10],[258,270,30],[290,325,40],[345,380,30],[440,450,15],[490,525,30],[540,552,15]];
  var dn = [[132,148,30],[165,175,20],[190,215,30],[228,260,15],[280,292,30],[340,355,35],[380,390,55],[405,425,30],[452,490,60],[530,540,10]];
  function flow(list, col, dir) {
    list.forEach(function (b) {
      for (var z = b[0]; z < b[1]; z += 3) {
        var r = (z - b[0]) / (b[1] - b[0]);
        var h = b[2] * (0.3 + 0.7 * Math.sin(Math.PI * r)) * (0.55 + 0.45 * seed(z));
        var y = dir > 0 ? Y(276 - h) : Y(276);
        el(m, 'rect', { x: Math.round(X(z)), y: y, width: 1, height: h / 3, fill: col, 'shape-rendering': 'crispEdges' });
      }
    });
  }
  flow(up, RED, 1);
  flow(dn, GREEN, -1);
  el(m, 'line', { x1: 1172, x2: 1314, y1: 542.5, y2: 542.5, stroke: GREY });
  el(m, 'line', { x1: 1172, x2: 1314, y1: 471.5, y2: 471.5, stroke: '#0000c0', 'stroke-width': 1.3 });
  el(m, 'line', { x1: 1172, x2: 1314, y1: 527.5, y2: 527.5, stroke: '#0000c0', 'stroke-width': 1.3 });

  function poly(a, col) {
    el(m, 'polyline', { points: a.map(function (p) { return X(p[0]).toFixed(1) + ',' + Y(p[1]).toFixed(1); }).join(' '), fill: 'none', stroke: col, 'stroke-width': 1 });
  }
  poly([[135,290],[140,360],[150,397],[158,360],[168,352],[175,380],[182,310],[190,290],[205,280],[210,310],[215,280],[225,250],[240,268],[270,268],[290,240],[310,228],[335,228],[350,248],[365,232],[380,235],[390,265],[405,285],[430,335],[450,340],[465,365],[472,380],[478,430],[490,445],[500,405],[512,400],[525,352],[540,365],[552,355]], '#ff00ff');
  poly([[125,130],[131,70],[135,120],[140,160],[146,175],[155,160],[165,150],[172,200],[180,165],[188,145],[197,175],[208,213],[218,180],[228,178],[242,180],[250,205],[260,185],[272,190],[288,220],[298,185],[305,155],[315,148],[335,152],[342,172],[358,170],[370,140],[378,137],[385,170],[400,178],[412,185],[420,205],[430,198],[445,205],[465,212],[472,270],[480,285],[490,300],[500,265],[510,235],[522,215],[535,225],[552,230]], '#000080');

  /* tick volume */
  var prof = [[125,630],[160,640],[190,665],[220,678],[240,686],[340,688],[400,688],[465,680],[472,655],[490,672],[530,672],[545,660],[552,655]];
  function profile(z) {
    for (var k = 1; k < prof.length; k++) {
      if (z <= prof[k][0]) {
        var a = prof[k - 1], b = prof[k];
        return a[1] + (b[1] - a[1]) * (z - a[0]) / (b[0] - a[0]);
      }
    }
    return 660;
  }
  for (var z = 125, n = 0; z < 552; z += 3, n++) {
    var p = profile(z) + seed(n + 7) * 12 - 6;
    var red = seed(n * 3 + 1) > (z > 285 && z < 320 ? 0.15 : (z > 160 && z < 240 ? 0.8 : (z > 470 && z < 495 ? 0.85 : 0.55)));
    if (z === 125) p = 513;
    if (z === 338) p = 665;
    el(m, 'rect', { x: Math.round(X(z)), y: Y(p), width: 1, height: 689 - Y(p), fill: red ? RED : GREEN, 'shape-rendering': 'crispEdges' });
  }
  el(m, 'rect', { x: 1313, y: 652, width: 1, height: 37, fill: GREEN });

  [[7280, 468.3, 'red'], [7251, 486, 'red'], [7223, 504.3, 'red'], [7194, 522.7, 'red'], [7166, 541, ''], [7137, 559, 'green'], [7109, 578, 'green'], [7080, 596.7, 'green']].forEach(function (l) {
    el(m, 'text', { x: 1316, y: l[1] + 4.5, class: 't13 ' + l[2] }, l[0]);
  });
  [[196500, 615.7], [147375, 634.3], [98250, 652.3], [49125, 671.3]].forEach(function (l) {
    el(m, 'text', { x: 1316, y: l[1] + 4.5, class: 't13 orange' }, l[0]);
  });
})();
```
